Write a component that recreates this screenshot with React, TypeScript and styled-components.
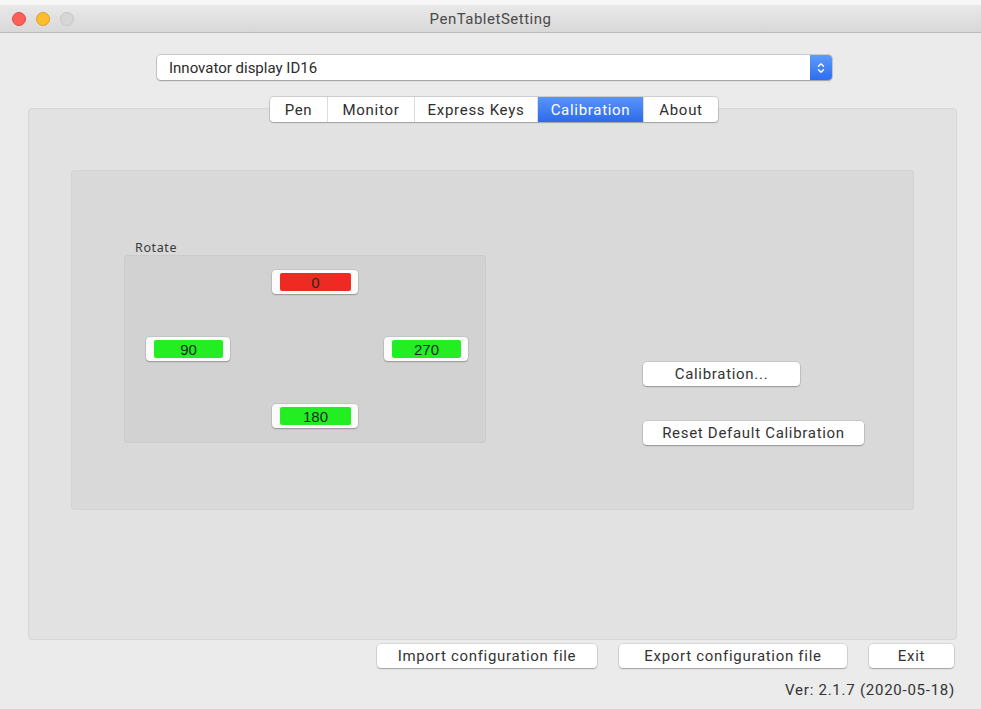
import React from "react";
import styled, { createGlobalStyle } from "styled-components";

const GlobalStyle = createGlobalStyle`
  *, *::before, *::after { box-sizing: border-box; }
  html, body { margin: 0; padding: 0; background: #ececec; }
  body { font-family: "Roboto", "Liberation Sans", Arial, sans-serif; color: #2e2e2e; }
`;

const Window = styled.div`
  width: 981px;
  height: 709px;
  background: #ebebeb;
  display: flex;
  flex-direction: column;
  overflow: hidden;
`;

const TitleBar = styled.div`
  height: 33px;
  flex: none;
  display: grid;
  grid-template-columns: 1fr auto 1fr;
  align-items: center;
  padding-top: 5px;
  background: linear-gradient(#f6f6f6 0 5px, #e9e9e9 5px, #d8d8d8 100%);
  border-bottom: 1px solid #bdbdbd;
`;

const Lights = styled.div`
  display: flex;
  gap: 10px;
  padding-left: 12px;
`;

const Light = styled.span<{ $fill: string; $ring: string }>`
  width: 14px;
  height: 14px;
  border-radius: 50%;
  background: ${(p) => p.$fill};
  border: 1px solid ${(p) => p.$ring};
`;

const Title = styled.div`
  font-size: 15px;
  letter-spacing: 0.5px;
  color: #4a4a4a;
`;

const Body = styled.div`
  flex: 1;
  display: flex;
  flex-direction: column;
  padding: 0 24px 0 28px;
  font-size: 15px;
  letter-spacing: 0.7px;
`;

const Select = styled.div`
  margin-top: 22px;
  margin-left: 129px;
  width: 675px;
  height: 25px;
  display: flex;
  align-items: stretch;
  background: #ffffff;
  border-radius: 4px;
  box-shadow: 0 0 0 1px rgba(0, 0, 0, 0.14), 0 1px 1.5px rgba(0, 0, 0, 0.22);
`;

const SelectText = styled.div`
  flex: 1;
  display: flex;
  align-items: center;
  padding-left: 12px;
  font-size: 15px;
  letter-spacing: 0;
  color: #2c2c2c;
`;

const Stepper = styled.div`
  width: 22px;
  display: flex;
  align-items: center;
  justify-content: center;
  border-radius: 0 4px 4px 0;
  background: linear-gradient(#5d9bfb, #2e6df0);
`;

const TabBar = styled.div`
  position: relative;
  z-index: 1;
  margin-top: 17px;
  margin-left: 242px;
  height: 25px;
  display: flex;
  align-self: flex-start;
  background: #ffffff;
  border-radius: 4px;
  box-shadow: 0 0 0 1px rgba(0, 0, 0, 0.12), 0 1px 1.5px rgba(0, 0, 0, 0.2);
  overflow: hidden;
`;

const Tab = styled.div<{ $w: number; $active?: boolean }>`
  width: ${(p) => p.$w}px;
  display: flex;
  align-items: center;
  justify-content: center;
  color: ${(p) => (p.$active ? "#ffffff" : "#2e2e2e")};
  background: ${(p) => (p.$active ? "linear-gradient(#5894f8, #2d6bec)" : "transparent")};
  & + & {
    border-left: 1px solid ${(p) => (p.$active ? "transparent" : "#dcdcdc")};
  }
`;

const Panel = styled.div`
  margin-top: -14px;
  height: 532px;
  background: #e2e2e2;
  border: 1px solid #d7d7d7;
  border-radius: 4px;
  padding: 61px 42px 0 42px;
`;

const InnerBox = styled.div`
  height: 340px;
  background: #d9d9d9;
  border: 1px solid #d3d3d3;
  border-radius: 3px;
  display: flex;
  align-items: flex-start;
  padding-left: 52px;
`;

const RotateSection = styled.div`
  margin-top: 69px;
  display: flex;
  flex-direction: column;
`;

const GroupLabel = styled.div`
  height: 15px;
  padding-left: 11px;
  font-family: "Noto Sans", "Open Sans", sans-serif;
  font-size: 12.5px;
  letter-spacing: 0.6px;
  line-height: 15px;
  color: #3a3a3a;
`;

const GroupBox = styled.div`
  width: 362px;
  height: 188px;
  background: #d2d2d2;
  border: 1px solid #cbcbcb;
  border-radius: 3px;
  display: grid;
  grid-template-columns: 84px 42px 86px 26px 84px;
  grid-template-rows: 24px 24px 24px;
  row-gap: 43px;
  padding: 14px 0 0 21px;
`;

const RotateButton = styled.div<{ $col: number; $row: number }>`
  grid-column: ${(p) => p.$col};
  grid-row: ${(p) => p.$row};
  background: #fbfbfb;
  border-radius: 4px;
  box-shadow: 0 0 0 0.5px rgba(0, 0, 0, 0.12), 0 1px 1.5px rgba(0, 0, 0, 0.25);
  padding: 3px 7px 3px 8px;
  display: flex;
`;

const RotateFace = styled.div<{ $color: string }>`
  flex: 1;
  display: flex;
  align-items: center;
  justify-content: center;
  background: ${(p) => p.$color};
  border-radius: 2px;
  font-family: "Liberation Sans", Arial, sans-serif;
  font-size: 15px;
  letter-spacing: 0;
  color: #1e2a1e;
`;

const ActionColumn = styled.div`
  margin-left: 157px;
  margin-top: 191px;
  display: flex;
  flex-direction: column;
  align-items: flex-start;
  gap: 35px;
`;

const Button = styled.div<{ $w: number }>`
  width: ${(p) => p.$w}px;
  height: 24px;
  display: flex;
  align-items: center;
  justify-content: center;
  background: #ffffff;
  border-radius: 4px;
  box-shadow: 0 0 0 0.5px rgba(0, 0, 0, 0.16), 0 1px 1.5px rgba(0, 0, 0, 0.26);
  color: #333333;
`;

const Footer = styled.div`
  margin-top: 4px;
  display: flex;
  justify-content: flex-end;
  gap: 22px;
  padding-right: 3px;
`;

const Version = styled.div`
  margin-top: 13px;
  text-align: right;
  padding-right: 2px;
  line-height: 18px;
  letter-spacing: 0.75px;
  color: #333333;
`;

const tabs = [
  { label: "Pen", w: 57 },
  { label: "Monitor", w: 87 },
  { label: "Express Keys", w: 123 },
  { label: "Calibration", w: 106, active: true },
  { label: "About", w: 75 },
];

const rotations = [
  { label: "0", col: 3, row: 1, color: "#ef2a22" },
  { label: "90", col: 1, row: 2, color: "#22ee22" },
  { label: "270", col: 5, row: 2, color: "#22ee22" },
  { label: "180", col: 3, row: 3, color: "#22ee22" },
];

const StepperIcon = () => (
  <svg width="10" height="14" viewBox="0 0 10 14" fill="none">
    <path d="M2.5 5.2 L5 2.8 L7.5 5.2" stroke="#fff" strokeWidth="1.4" strokeLinecap="round" strokeLinejoin="round" />
    <path d="M2.5 8.8 L5 11.2 L7.5 8.8" stroke="#fff" strokeWidth="1.4" strokeLinecap="round" strokeLinejoin="round" />
  </svg>
);

export default function App() {
  return (
    <>
      <GlobalStyle />
      <Window>
        <TitleBar>
          <Lights>
            <Light $fill="#fc605a" $ring="#e2463f" />
            <Light $fill="#fdbc2e" $ring="#dfa023" />
            <Light $fill="#d6d6d6" $ring="#c6c6c6" />
          </Lights>
          <Title>PenTabletSetting</Title>
          <div />
        </TitleBar>
        <Body>
          <Select>
            <SelectText>Innovator display ID16</SelectText>
            <Stepper>
              <StepperIcon />
            </Stepper>
          </Select>
          <TabBar>
            {tabs.map((t) => (
              <Tab key={t.label} $w={t.w} $active={t.active}>
                {t.label}
              </Tab>
            ))}
          </TabBar>
          <Panel>
            <InnerBox>
              <RotateSection>
                <GroupLabel>Rotate</GroupLabel>
                <GroupBox>
                  {rotations.map((r) => (
                    <RotateButton key={r.label} $col={r.col} $row={r.row}>
                      <RotateFace $color={r.color}>{r.label}</RotateFace>
                    </RotateButton>
                  ))}
                </GroupBox>
              </RotateSection>
              <ActionColumn>
                <Button $w={157}>Calibration...</Button>
                <Button $w={221}>Reset Default Calibration</Button>
              </ActionColumn>
            </InnerBox>
          </Panel>
          <Footer>
            <Button $w={220}>Import configuration file</Button>
            <Button $w={228}>Export configuration file</Button>
            <Button $w={85}>Exit</Button>
          </Footer>
          <Version>Ver: 2.1.7 (2020-05-18)</Version>
        </Body>
      </Window>
    </>
  );
}
